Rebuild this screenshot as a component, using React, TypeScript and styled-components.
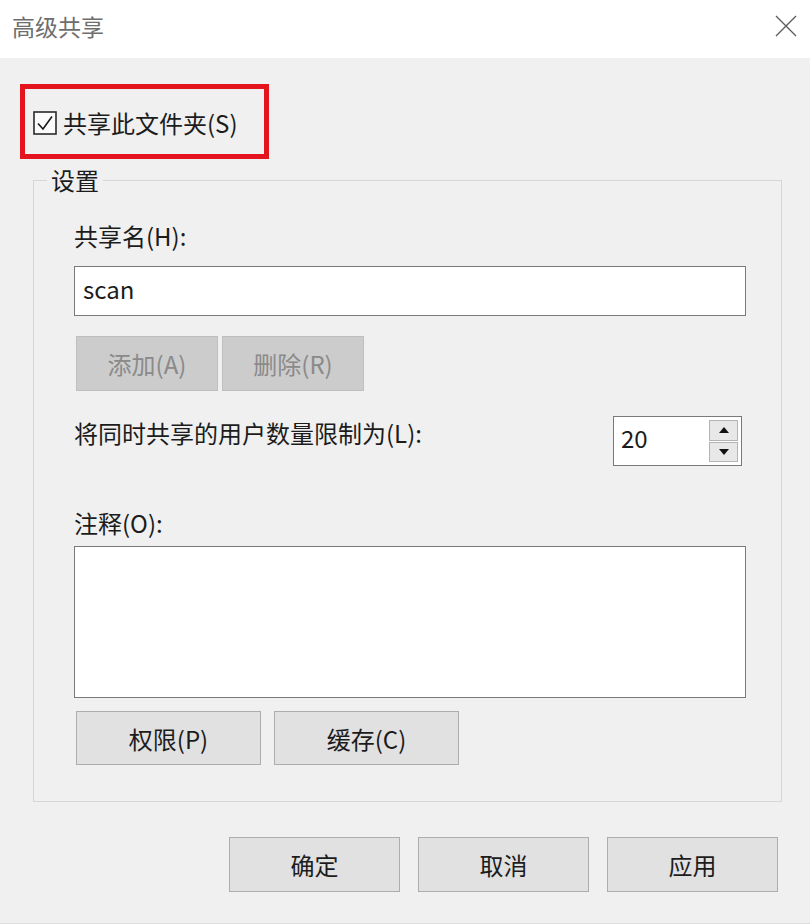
import * as React from 'react';
import styled, { createGlobalStyle } from 'styled-components';

const GlobalStyle = createGlobalStyle`
	html, body {
		margin: 0;
		padding: 0;
		background: #f0f0f0;
	}
	body {
		font-family: 'Noto Sans CJK SC', 'Noto Sans', sans-serif;
		color: #1c1c1c;
	}
	* {
		box-sizing: border-box;
	}
`;

const App = () => {
	return (
		<Window>
			<GlobalStyle />
			<TitleBar>
				<Title>高级共享</Title>
				<CloseIcon width="22" height="22" viewBox="0 0 22 22">
					<path d="M1 1 L21 21 M21 1 L1 21" stroke="#5a5a5a" strokeWidth="1.3" fill="none" />
				</CloseIcon>
			</TitleBar>

			<Body>
				<Highlight>
					<CheckBox width="24" height="24" viewBox="0 0 24 24">
						<rect x="1" y="1" width="22" height="22" fill="#fbfbfb" stroke="#2a2a2a" strokeWidth="1.6" />
						<polyline points="5,12.5 10,18 19,5.5" fill="none" stroke="#1a1a1a" strokeWidth="1.6" />
					</CheckBox>
					<CheckLabel>共享此文件夹(S)</CheckLabel>
				</Highlight>

				<Group>
					<Legend>设置</Legend>
					<Label $top={28}>共享名(H):</Label>
					<TextBox>scan</TextBox>
					<ButtonRow $top={20}>
						<Button $w={142} $h={55} disabled>添加(A)</Button>
						<Button $w={142} $h={55} disabled>删除(R)</Button>
					</ButtonRow>

					<LimitRow>
						<Label $top={3}>将同时共享的用户数量限制为(L):</Label>
						<Spinner>
							<SpinValue>20</SpinValue>
							<SpinButtons>
								<SpinButton>
									<svg width="10" height="6" viewBox="0 0 10 6">
										<polygon points="0,6 10,6 5,0" fill="#111" />
									</svg>
								</SpinButton>
								<SpinButton>
									<svg width="10" height="6" viewBox="0 0 10 6">
										<polygon points="0,0 10,0 5,6" fill="#111" />
									</svg>
								</SpinButton>
							</SpinButtons>
						</Spinner>
					</LimitRow>

					<Label $top={43}>注释(O):</Label>
					<Comment />
					<ButtonRow $top={13} $gap={13}>
						<Button $w={185} $h={54}>权限(P)</Button>
						<Button $w={185} $h={54}>缓存(C)</Button>
					</ButtonRow>
				</Group>

				<Footer>
					<Button $w={171} $h={55}>确定</Button>
					<Button $w={171} $h={55}>取消</Button>
					<Button $w={171} $h={55}>应用</Button>
				</Footer>
			</Body>
		</Window>
	);
};

export default App;

const Window = styled.div`
	width: 810px;
	height: 924px;
	display: flex;
	flex-direction: column;
	background: #f0f0f0;
	border-bottom: 1px solid #dcdcdc;
`;

const TitleBar = styled.div`
	height: 58px;
	flex-shrink: 0;
	background: #ffffff;
	display: flex;
	align-items: center;
	justify-content: space-between;
	padding: 0 13px 6px 12px;
`;

const Title = styled.div`
	font-size: 23px;
	color: #6e6e6e;
`;

const CloseIcon = styled.svg`
	display: block;
`;

const Body = styled.div`
	flex: 1;
	display: flex;
	flex-direction: column;
	align-items: stretch;
	padding: 26px 28px 0 20px;
`;

const Highlight = styled.div`
	width: 249px;
	height: 75px;
	border: 5px solid #e3141e;
	display: flex;
	align-items: center;
	gap: 6px;
	padding: 3px 0 0 8px;
`;

const CheckBox = styled.svg`
	display: block;
	flex-shrink: 0;
`;

const CheckLabel = styled.span`
	font-size: 24px;
	line-height: 28px;
`;

const Group = styled.fieldset`
	margin: 7px 0 0 13px;
	padding: 0 35px 36px 40px;
	border: 1px solid #d6d6d6;
	min-width: 0;
	display: flex;
	flex-direction: column;
`;

const Legend = styled.legend`
	font-size: 24px;
	line-height: 28px;
	padding: 0 4px;
	margin-left: -27px;
`;

const Label = styled.div<{ $top: number }>`
	font-size: 24px;
	line-height: 28px;
	margin-top: ${(p) => p.$top}px;
`;

const TextBox = styled.div`
	margin-top: 16px;
	height: 50px;
	background: #ffffff;
	border: 1px solid #7a7a7a;
	font-size: 24px;
	line-height: 44px;
	padding-left: 8px;
`;

const ButtonRow = styled.div<{ $top: number; $gap?: number }>`
	display: flex;
	gap: ${(p) => p.$gap ?? 4}px;
	margin-top: ${(p) => p.$top}px;
	padding-left: 2px;
`;

const Button = styled.button<{ $w: number; $h: number }>`
	width: ${(p) => p.$w}px;
	height: ${(p) => p.$h}px;
	font-family: inherit;
	font-size: 24px;
	color: #1c1c1c;
	background: #e1e1e1;
	border: 1px solid #adadad;
	padding: 0;
	cursor: default;

	&:disabled {
		background: #cccccc;
		border-color: #bfbfbf;
		color: #8a8a8a;
	}
`;

const LimitRow = styled.div`
	margin-top: 25px;
	display: flex;
	justify-content: space-between;
	align-items: flex-start;
`;

const Spinner = styled.div`
	width: 129px;
	height: 50px;
	margin-right: 4px;
	background: #ffffff;
	border: 1px solid #7a7a7a;
	display: flex;
	align-items: stretch;
	justify-content: space-between;
	padding: 3px 3px 3px 0;
`;

const SpinValue = styled.div`
	font-size: 24px;
	line-height: 36px;
	padding-left: 7px;
`;

const SpinButtons = styled.div`
	width: 29px;
	display: flex;
	flex-direction: column;
	gap: 1px;
`;

const SpinButton = styled.div`
	flex: 1;
	background: #e8e8e8;
	border: 1px solid #b4b4b4;
	display: flex;
	align-items: center;
	justify-content: center;
`;

const Comment = styled.div`
	margin-top: 9px;
	height: 152px;
	background: #ffffff;
	border: 1px solid #7a7a7a;
`;

const Footer = styled.div`
	display: flex;
	justify-content: flex-end;
	gap: 18px;
	margin-top: 35px;
	padding-right: 4px;
`;
